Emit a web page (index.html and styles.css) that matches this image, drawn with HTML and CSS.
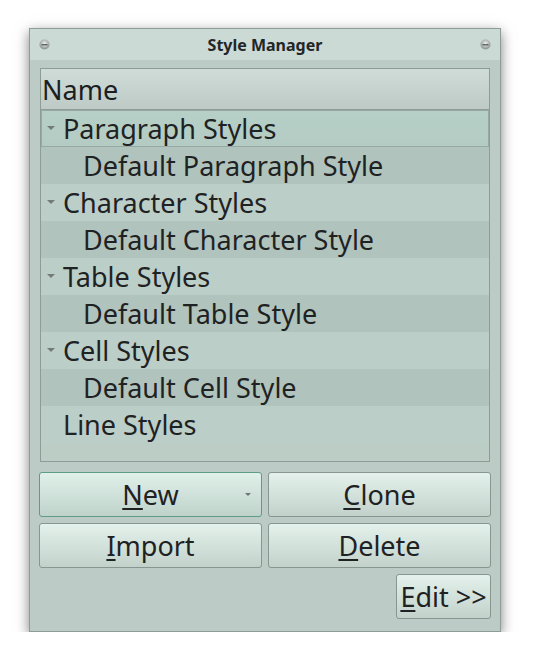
FILE: index.html
```html
<!DOCTYPE html>
<html>
<head>
<meta charset="utf-8">
<link rel="stylesheet" href="styles.css">
</head>
<body>
<div class="window">
  <div class="titlebar">
    <svg class="tb-btn" width="11" height="11" viewBox="0 0 11 11"><defs><radialGradient id="g1" cx="50%" cy="40%" r="60%"><stop offset="0" stop-color="#eef1f0"/><stop offset="1" stop-color="#858d8a"/></radialGradient></defs><circle cx="5.5" cy="5.5" r="5" fill="url(#g1)"/><rect x="2.5" y="5" width="6" height="1.4" fill="#5e6562"/></svg>
    <div class="title">Style Manager</div>
    <svg class="tb-btn" width="11" height="11" viewBox="0 0 11 11"><defs><radialGradient id="g2" cx="50%" cy="40%" r="60%"><stop offset="0" stop-color="#eef1f0"/><stop offset="1" stop-color="#858d8a"/></radialGradient></defs><circle cx="5.5" cy="5.5" r="5" fill="url(#g2)"/><rect x="2.5" y="5" width="6" height="1.4" fill="#5e6562"/></svg>
  </div>
  <div class="content">
    <div class="tree">
      <div class="header">Name</div>
      <div class="rows">
        <div class="row parent current"><span class="arrow"></span>Paragraph Styles</div>
        <div class="row child">Default Paragraph Style</div>
        <div class="row parent"><span class="arrow"></span>Character Styles</div>
        <div class="row child">Default Character Style</div>
        <div class="row parent"><span class="arrow"></span>Table Styles</div>
        <div class="row child">Default Table Style</div>
        <div class="row parent"><span class="arrow"></span>Cell Styles</div>
        <div class="row child">Default Cell Style</div>
        <div class="row parent"><span class="noarrow"></span>Line Styles</div>
      </div>
    </div>
    <div class="buttons">
      <div class="btn focus"><span><u>N</u>ew</span><span class="drop"></span></div>
      <div class="btn"><span><u>C</u>lone</span></div>
      <div class="btn"><span><u>I</u>mport</span></div>
      <div class="btn"><span><u>D</u>elete</span></div>
    </div>
    <div class="editrow">
      <div class="btn edit"><span><u>E</u>dit &gt;&gt;</span></div>
    </div>
  </div>
</div>
</body>
</html>
```
FILE: styles.css
```css
html, body {
  margin: 0;
  padding: 0;
  background: #ffffff;
}
body {
  padding: 28px 0 0 29px;
  font-family: "Noto Sans", "Open Sans", sans-serif;
  color: #1f2223;
}
.window {
  width: 470px;
  height: 602px;
  border: 1px solid #8e9c97;
  background: #bccbc5;
  box-shadow: 0 4px 12px rgba(0, 0, 0, 0.5);
  display: flex;
  flex-direction: column;
}
.titlebar {
  height: 31px;
  background: #cbdad5;
  display: flex;
  align-items: center;
  justify-content: space-between;
  padding: 0 9px 0 9px;
}
.tb-btn {
  display: block;
}
.title {
  font-weight: bold;
  font-size: 16px;
  color: #232627;
}
.content {
  padding: 8px 9px 0 9px;
  display: flex;
  flex-direction: column;
}
.tree {
  margin: 0 1px;
  height: 392px;
  border: 1px solid #8d9c96;
  background: #bccdc6;
  display: flex;
  flex-direction: column;
}
.header {
  height: 40px;
  line-height: 42px;
  font-size: 27px;
  padding-left: 1px;
  background: linear-gradient(#cfdcd7, #bdcac5);
  border-bottom: 1px solid #8f9b97;
  color: #1c1e1f;
}
.rows {
  display: flex;
  flex-direction: column;
}
.row {
  height: 37px;
  line-height: 37px;
  font-size: 27px;
  white-space: nowrap;
  display: flex;
  align-items: center;
  box-sizing: border-box;
}
.parent {
  background: #bccec8;
}
.child {
  background: #b0c3bc;
  padding-left: 42px;
}
.current {
  background: linear-gradient(#b6d0c7, #b4cbc3);
  border: 1px solid #96aaa3;
}
.arrow, .noarrow {
  display: inline-block;
  width: 22px;
  height: 37px;
  position: relative;
  flex: none;
}
.current .arrow {
  margin-left: -1px;
}
.arrow::after {
  content: "";
  position: absolute;
  left: 6px;
  top: 16px;
  border-left: 4px solid transparent;
  border-right: 4px solid transparent;
  border-top: 4px solid #727b78;
}
.buttons {
  margin-top: 10px;
  display: grid;
  grid-template-columns: 1fr 1fr;
  gap: 6px;
}
.btn {
  height: 45px;
  box-sizing: border-box;
  border: 1px solid #879691;
  border-radius: 3px;
  background: linear-gradient(#e4f1ec, #c2d2cb);
  font-size: 27px;
  display: flex;
  align-items: center;
  justify-content: center;
  position: relative;
  color: #1f2223;
}
.btn u {
  text-decoration-thickness: 2px;
  text-underline-offset: 3px;
}
.btn.focus {
  border-color: #5f9c86;
  background: linear-gradient(#e0f0ea, #bfd3cb);
}
.drop {
  position: absolute;
  right: 10px;
  top: 20px;
  border-left: 3px solid transparent;
  border-right: 3px solid transparent;
  border-top: 3px solid #6d7673;
}
.editrow {
  margin-top: 6px;
  display: flex;
  justify-content: flex-end;
}
.btn.edit {
  width: 95px;
}
```
